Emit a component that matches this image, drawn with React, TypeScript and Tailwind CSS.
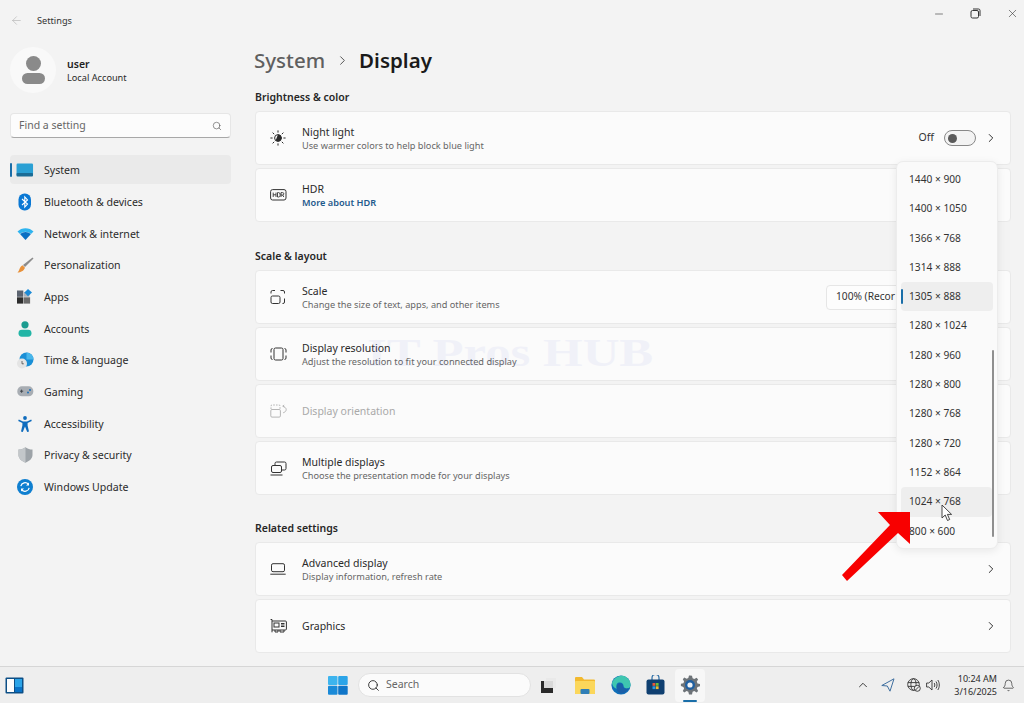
import { ReactNode } from "react";
import { ChevronRight, Search, ArrowLeft, Minus, X, ChevronUp, Bell } from "lucide-react";

const uiFont = "font-['Noto_Sans',sans-serif]";

const navIcons: Record<string, ReactNode> = {
  System: (
    <svg width="18" height="14" viewBox="0 0 18 14">
      <rect x="0.5" y="0.5" width="15" height="11" rx="1" fill="#2aa0d4" transform="scale(1.1)" />
      <rect x="0.5" y="10" width="16.5" height="3.5" rx="1" fill="#1b6c96" />
    </svg>
  ),
  "Bluetooth & devices": (
    <svg width="14" height="18" viewBox="0 0 14 18">
      <rect x="0.5" y="0.5" width="12.5" height="17" rx="6" fill="#0a78d4" />
      <path d="M4 6l5.5 5L6.8 14V4L9.5 7 4 12" stroke="#fff" strokeWidth="1.1" fill="none" />
    </svg>
  ),
  "Network & internet": (
    <svg width="17" height="14" viewBox="0 0 17 14">
      <path d="M0.5 4.5C4.5 0 12.5 0 16.5 4.5L14 7C11 4 6 4 3 7z" fill="#2fb4ef" />
      <path d="M3.2 7.2C6 4.4 11 4.4 13.8 7.2L8.5 13z" fill="#0a6fc2" />
    </svg>
  ),
  Personalization: (
    <svg width="17" height="17" viewBox="0 0 17 17">
      <path d="M15.5 0.5L16.5 1.5 8 10 6 8z" fill="#8c8c8c" />
      <path d="M5.5 8.2L8 10.8C7 14 3.5 15.5 0.5 15.5 2.5 14 2.5 9.5 5.5 8.2z" fill="#e8913a" />
    </svg>
  ),
  Apps: (
    <svg width="16" height="15" viewBox="0 0 16 15">
      <rect x="0" y="1.5" width="6.3" height="6.3" fill="#5c6470" />
      <rect x="0" y="8.3" width="6.3" height="6.3" fill="#2d2d2d" />
      <rect x="6.8" y="8.3" width="6.3" height="6.3" fill="#6b6b6b" />
      <rect x="7" y="3" width="5.5" height="4.8" fill="#aab2bb" />
      <path d="M11 0l4 3.6-4 3.6-3.6-3.6z" fill="#1b8ad6" />
    </svg>
  ),
  Accounts: (
    <svg width="14" height="16" viewBox="0 0 14 16">
      <circle cx="7" cy="3.8" r="3.6" fill="#1a9c90" />
      <rect x="0.5" y="8.7" width="13" height="7" rx="3.4" fill="#22b5a6" />
    </svg>
  ),
  "Time & language": (
    <svg width="17" height="17" viewBox="0 0 17 17">
      <circle cx="9.5" cy="7.5" r="7" fill="#1a8fd6" />
      <path d="M9.5 0.5a7 7 0 0 1 7 7h-7z" fill="#48b6ea" />
      <circle cx="5" cy="11.5" r="5" fill="#e4e4e4" />
      <path d="M5 9v2.8h1.8" stroke="#4a4a4a" strokeWidth="0.8" fill="none" />
    </svg>
  ),
  Gaming: (
    <svg width="17" height="11" viewBox="0 0 17 11">
      <rect x="0.3" y="0.3" width="16" height="10" rx="4.6" fill="#a8adb3" />
      <path d="M3 5.2h3.2M4.6 3.6v3.2" stroke="#3a3f45" strokeWidth="0.9" />
      <circle cx="11" cy="6.5" r="1" fill="#1c6fb6" />
      <circle cx="13" cy="4" r="1" fill="#1c6fb6" />
    </svg>
  ),
  Accessibility: (
    <svg width="14" height="16" viewBox="0 0 14 16">
      <circle cx="7" cy="2" r="1.9" fill="#0f6cbd" />
      <path d="M0.8 3.6L5 5.4h4l4.2-1.8.6 1.4L9.6 7v2.6L11 15.4 9.2 16 7 10.4 4.8 16 3 15.4 4.4 9.6V7L0.2 5z" fill="#0f6cbd" />
    </svg>
  ),
  "Privacy & security": (
    <svg width="15" height="16" viewBox="0 0 15 16">
      <path d="M7.5 0.3C9.5 2 12 2.5 14.5 2.6V8c0 3.6-3.2 6.2-7 7.7C3.7 14.2 0.5 11.6 0.5 8V2.6C3 2.5 5.5 2 7.5 0.3z" fill="#9da3a8" />
      <path d="M7.5 0.3V15.7C3.7 14.2 0.5 11.6 0.5 8V2.6C3 2.5 5.5 2 7.5 0.3z" fill="#c3c7ca" />
    </svg>
  ),
  "Windows Update": (
    <svg width="16" height="16" viewBox="0 0 16 16">
      <circle cx="8" cy="8" r="8" fill="#0f7fd0" />
      <path d="M3.8 7.2A4.3 4.3 0 0 1 11.4 5.4M12.2 8.8A4.3 4.3 0 0 1 4.6 10.6" stroke="#fff" strokeWidth="1.2" fill="none" />
      <path d="M12 3.4v3h-3zM4 12.6v-3h3z" fill="#fff" />
    </svg>
  ),
};

const navItems = Object.keys(navIcons);

const NightIcon = () => (
  <svg width="16" height="16" viewBox="0 0 16 16" stroke="#2b2b2b" strokeWidth="1" strokeLinecap="round">
    <circle cx="8" cy="8" r="3.4" fill="none" />
    <path d="M8 4.6a3.4 3.4 0 0 1 0 6.8 5 5 0 0 1-2.4-.9z" fill="#2b2b2b" stroke="none" />
    <path d="M8 0.8v1.4M8 13.8v1.4M0.8 8h1.4M13.8 8h1.4M2.9 2.9l1 1M12.1 12.1l1 1M2.9 13.1l1-1M12.1 3.9l1-1" />
  </svg>
);

const HdrIcon = () => (
  <svg width="17" height="12" viewBox="0 0 17 12">
    <rect x="0.6" y="0.6" width="15.4" height="10.4" rx="2" fill="none" stroke="#333" strokeWidth="1" />
    <path d="M3.2 3.6v4.4M6 3.6v4.4M3.2 5.8H6M7.5 3.6v4.4h1.2a1.5 1.5 0 0 0 1.4-1.4V5a1.5 1.5 0 0 0-1.4-1.4zM11 8V3.6h1.6a1.2 1.2 0 0 1 0 2.4H11M12.6 6l1.2 2" fill="none" stroke="#333" strokeWidth="0.9" />
  </svg>
);

const ScaleIcon = () => (
  <svg width="16" height="16" viewBox="0 0 16 16" fill="none" stroke="#333" strokeWidth="1">
    <rect x="1" y="7" width="9" height="7.5" rx="1.5" />
    <path d="M1 4.5V3a1.5 1.5 0 0 1 1.5-1.5H5M10.5 1.5H13A1.5 1.5 0 0 1 14.5 3v1.5M14.5 9.5V13A1.5 1.5 0 0 1 13 14.5h-.5" />
  </svg>
);

const ResolutionIcon = () => (
  <svg width="17" height="14" viewBox="0 0 17 14" fill="none" stroke="#333" strokeWidth="1">
    <rect x="4" y="1" width="9" height="12" rx="1.5" />
    <path d="M2.5 1.5A1.5 1.5 0 0 0 1 3v2.5M1 8.5V11a1.5 1.5 0 0 0 1.5 1.5M14.5 1.5A1.5 1.5 0 0 1 16 3v2.5M16 8.5V11a1.5 1.5 0 0 1-1.5 1.5" />
  </svg>
);

const OrientationIcon = () => (
  <svg width="17" height="14" viewBox="0 0 17 14" fill="none" stroke="#b5b5b5" strokeWidth="1">
    <path d="M1 5V2a1 1 0 0 1 1-1h7a1 1 0 0 1 1 1v3" strokeDasharray="1.6 1.2" />
    <rect x="0.8" y="5.5" width="9.6" height="7.6" rx="1.2" />
    <path d="M12.8 2.2c2 .6 3.4 2 3.4 3.4s-1.2 2.6-3 3.2M12.8 2.2l1.4-1.2M12.8 2.2l1.6 1" />
  </svg>
);

const MultiIcon = () => (
  <svg width="17" height="15" viewBox="0 0 17 15" fill="none" stroke="#333" strokeWidth="1">
    <rect x="5" y="1" width="11" height="8" rx="1.5" />
    <rect x="1.5" y="4.5" width="10" height="7" rx="1.5" fill="#fbfbfb" />
    <path d="M0.5 14h12" />
  </svg>
);

const LaptopIcon = () => (
  <svg width="16" height="12" viewBox="0 0 16 12" fill="none" stroke="#333" strokeWidth="1">
    <rect x="1.5" y="0.7" width="13" height="8" rx="1.5" />
    <path d="M0.3 11.2h15.4" />
  </svg>
);

const GraphicsIcon = () => (
  <svg width="17" height="14" viewBox="0 0 17 14" fill="none" stroke="#333" strokeWidth="1">
    <path d="M0.6 0.5h1.4v12.8M2 2h13.4a1 1 0 0 1 1 1v7a1 1 0 0 1-1 1H2" />
    <rect x="4" y="4" width="5" height="4" />
    <path d="M11 4.5h3.5M11 6h3.5M11 7.5h3.5M5 11v2h3v-2M10 11v2h4v-2" />
  </svg>
);

function Card({
  icon,
  title,
  sub,
  link,
  disabled,
  right,
}: {
  icon: ReactNode;
  title: string;
  sub?: string;
  link?: string;
  disabled?: boolean;
  right?: ReactNode;
}) {
  return (
    <div className="h-[54px] mt-[3px] first:mt-0 flex items-center bg-[#fbfbfb] border border-[#e9e9e9] rounded-[4px] pl-[13px] pr-[14px]">
      <div className="w-[18px] flex justify-center">{icon}</div>
      <div className="ml-[15px] flex flex-col">
        <span className={`text-[10.5px] leading-[14px] ${disabled ? "text-[#a9a9a9]" : "text-[#2a2a2a]"}`}>{title}</span>
        {sub && <span className="text-[9.2px] leading-[13px] text-[#666]">{sub}</span>}
        {link && <span className="text-[9.2px] leading-[13px] font-semibold text-[#1f5a8c]">{link}</span>}
      </div>
      <div className="ml-auto flex items-center">{right}</div>
    </div>
  );
}

const Chevron = () => <ChevronRight size={14} strokeWidth={1.6} className="text-[#222]" />;

function SectionTitle({ children, className }: { children: string; className?: string }) {
  return (
    <div className={`h-[18px] pt-[2px] mb-[5px] flex items-center text-[10.5px] font-semibold text-[#262626] ${className ?? ""}`}>
      {children}
    </div>
  );
}

const resolutions = [
  "1440 × 900",
  "1400 × 1050",
  "1366 × 768",
  "1314 × 888",
  "1305 × 888",
  "1280 × 1024",
  "1280 × 960",
  "1280 × 800",
  "1280 × 768",
  "1280 × 720",
  "1152 × 864",
  "1024 × 768",
  "800 × 600",
];

function ResolutionMenu() {
  return (
    <div className="absolute left-[896px] top-[161px] w-[102px] h-[388px] bg-[#fafafa] border border-[#ececec] rounded-[7px] shadow-[0_2px_8px_rgba(0,0,0,0.08)] pt-[3px] px-[4px]">
      {resolutions.map((r) => (
        <div
          key={r}
          className={`relative h-[29.3px] pl-[8px] flex items-center text-[10.2px] text-[#333] rounded-[4px] ${
            r === "1305 × 888" ? "bg-[#eeeeee]" : r === "1024 × 768" ? "bg-[#eeeeee] mr-[1px]" : ""
          }`}
        >
          {r === "1305 × 888" && <span className="absolute left-0 top-[7px] h-[15px] w-[2px] bg-[#1a6ea8] rounded" />}
          {r}
        </div>
      ))}
      <div className="absolute right-[3px] top-[188px] h-[187px] w-[2px] rounded bg-[#8f8f8f]" />
    </div>
  );
}

function Taskbar() {
  return (
    <div className="h-[37px] border-t border-[#d6d6d6] bg-[#eeeeee] flex items-center">
      <svg className="ml-[5px]" width="19" height="17" viewBox="0 0 19 17">
        <rect x="0.5" y="0.5" width="18" height="16" rx="1" fill="#0d4f86" />
        <rect x="2" y="2" width="7" height="13" fill="#fdfdfd" />
        <rect x="10" y="2" width="7" height="8" fill="#2ba4e8" />
        <rect x="10" y="10" width="7" height="5" fill="#0a72c6" />
      </svg>
      <svg className="ml-[304px]" width="20" height="19" viewBox="0 0 20 19">
        <rect x="0" y="0" width="9.5" height="9" rx="1" fill="#3db4ee" />
        <rect x="10.2" y="0" width="9.5" height="9" rx="1" fill="#2ba4e8" />
        <rect x="0" y="9.7" width="9.5" height="9" rx="1" fill="#1a8ad8" />
        <rect x="10.2" y="9.7" width="9.5" height="9" rx="1" fill="#0f75c8" />
      </svg>
      <div className="ml-[10px] w-[173px] h-[24px] rounded-full bg-[#fbfbfb] border border-[#e2e2e2] flex items-center pl-[8px] gap-[6px]">
        <Search size={13} strokeWidth={1.6} className="text-[#222]" />
        <span className="text-[10.5px] text-[#666]">Search</span>
      </div>
      <svg className="ml-[10px]" width="15" height="15" viewBox="0 0 15 15">
        <rect x="5" y="0" width="10" height="10" fill="#e9e9e9" />
        <rect x="0" y="3" width="12" height="12" fill="#2a2a2a" />
        <rect x="3" y="3" width="9" height="7" fill="#d8d8d8" />
      </svg>
      <svg className="ml-[19px]" width="20" height="17" viewBox="0 0 20 17">
        <path d="M0 1a1 1 0 0 1 1-1h6l2 2.5h10a1 1 0 0 1 1 1V16a1 1 0 0 1-1 1H1a1 1 0 0 1-1-1z" fill="#f2b92e" />
        <rect x="0" y="4" width="20" height="13" rx="1" fill="#fbd75b" />
        <rect x="5.5" y="12" width="9" height="5" rx="1" fill="#2f7fb8" />
      </svg>
      <svg className="ml-[16px]" width="20" height="20" viewBox="0 0 20 20">
        <circle cx="10" cy="10" r="9.6" fill="#0f6fb8" />
        <path d="M1 8C3 2 9 0 13 1c4 1.4 6.6 5 6.6 9 0 2-1.4 3.4-3.6 3.4-2 0-3.4-1-3.4-2.4 0-2-2-4-4.6-3.4C5.4 8 4.8 11 6 14 3 13 1.4 11 1 8z" fill="#3fc6b0" />
        <path d="M7 9c2-1.5 5-.5 5 2 0 2.5 3 3.5 6 2-2 4-6 6-9 5.5C5.5 17 4.5 12 7 9z" fill="#1a5fa8" />
      </svg>
      <svg className="ml-[15px]" width="19" height="20" viewBox="0 0 19 20">
        <path d="M6 5V3a3.5 3.5 0 0 1 7 0v2" fill="none" stroke="#2c6ea6" strokeWidth="1.2" />
        <rect x="0.5" y="4.5" width="18" height="15" rx="2" fill="#0f3f70" />
        <rect x="6.5" y="8" width="2.8" height="2.8" fill="#e8553a" />
        <rect x="9.8" y="8" width="2.8" height="2.8" fill="#6cbc3a" />
        <rect x="6.5" y="11.3" width="2.8" height="2.8" fill="#2a9ae0" />
        <rect x="9.8" y="11.3" width="2.8" height="2.8" fill="#f2b92e" />
      </svg>
      <div className="ml-[10px] relative w-[30px] h-[33px] rounded-[4px] bg-[#f7f7f7] flex items-center justify-center">
        <svg width="20" height="20" viewBox="0 0 20 20">
          <path
            d="M10 0.5l2 .2.6 2.5 1.7.8 2.3-1.2 1.5 1.6-1.3 2.2.7 1.8 2.5.6v2.2l-2.5.7-.7 1.7 1.3 2.3-1.5 1.5-2.3-1.3-1.7.7-.6 2.6H9l-.7-2.6-1.7-.7-2.3 1.3-1.5-1.5 1.3-2.3-.7-1.7L.9 11V8.8l2.5-.6.7-1.8L2.8 4.2l1.5-1.6 2.3 1.2 1.7-.8L9 .5z"
            fill="#6d7378"
          />
          <circle cx="10" cy="10" r="5" fill="#1f5fa0" />
          <circle cx="10" cy="10" r="2.6" fill="#eef2f6" />
        </svg>
        <span className="absolute bottom-0 left-[8px] w-[14px] h-[2px] rounded bg-[#1a6ea8]" />
      </div>
      <ChevronUp size={14} strokeWidth={1.6} className="ml-[151px] text-[#333]" />
      <svg className="ml-[11px]" width="14" height="14" viewBox="0 0 14 14" fill="none" stroke="#3f6f9f" strokeWidth="1">
        <path d="M13 0.8L0.8 7.5 6.3 8 9 13.2z" />
      </svg>
      <svg className="ml-[12px]" width="14" height="14" viewBox="0 0 14 14" fill="none" stroke="#333" strokeWidth="0.9">
        <circle cx="6.5" cy="6.5" r="5.8" />
        <ellipse cx="6.5" cy="6.5" rx="2.6" ry="5.8" />
        <path d="M0.9 4.6h11.2M0.9 8.4h11.2" />
        <circle cx="10.3" cy="10.3" r="3" fill="#eee" />
        <path d="M8.5 12l3.5-3.5" />
      </svg>
      <svg className="ml-[5px]" width="14" height="12" viewBox="0 0 14 12" fill="none" stroke="#333" strokeWidth="0.9">
        <path d="M0.6 4h2.2L6 1v10L2.8 8H0.6zM8.2 4c.8 1.2.8 2.8 0 4M10 2.5c1.4 2 1.4 5 0 7M11.8 1c2 3 2 7 0 10" />
      </svg>
      <div className="ml-[8px] w-[50px] flex flex-col items-end text-[9px] leading-[13px] text-[#2a2a2a] pr-[1px]">
        <span>10:24 AM</span>
        <span>3/16/2025</span>
      </div>
      <Bell size={13} strokeWidth={1.3} className="ml-[4px] text-[#333]" />
    </div>
  );
}

export default function App() {
  return (
    <div className={`relative w-[1024px] h-[703px] overflow-hidden flex flex-col bg-[#f3f3f3] ${uiFont}`}>
      <div className="h-[666px] flex">
        <aside className="w-[255px] pl-[10px] pr-[24px] flex flex-col">
          <div className="h-[41px] flex items-center">
            <ArrowLeft size={13} strokeWidth={1.2} className="text-[#b3b3b3]" />
            <span className="ml-[14px] text-[9.2px] text-[#333]">Settings</span>
          </div>
          <div className="mt-[6px] h-[46px] flex items-center">
            <div className="w-[46px] h-[46px] rounded-full bg-[#f9f9f9] flex flex-col items-center justify-center">
              <span className="w-[15px] h-[15px] rounded-full bg-[#8a8a8a]" />
              <span className="mt-[2px] w-[23px] h-[11px] rounded-full bg-[#8a8a8a]" />
            </div>
            <div className="ml-[11px] mt-[2px] flex flex-col">
              <span className="text-[10.5px] leading-[14px] font-semibold text-[#1f1f1f]">user</span>
              <span className="text-[9.2px] leading-[14px] text-[#2a2a2a]">Local Account</span>
            </div>
          </div>
          <div className="mt-[20px] h-[25px] rounded-[4px] bg-[#fcfcfc] border border-[#e6e6e6] border-b-[#a8a8a8] flex items-center px-[8px]">
            <span className="text-[10.5px] text-[#666]">Find a setting</span>
            <Search size={10} strokeWidth={1.5} className="ml-auto text-[#555]" />
          </div>
          <nav className="mt-[17px] flex flex-col">
            {navItems.map((item) => (
              <div
                key={item}
                className={`relative flex items-center ${item === "System" ? "h-[29px] mb-[2px] bg-[#eaeaea] rounded-[4px]" : "h-[31.7px]"}`}
              >
                {item === "System" && <span className="absolute left-0 top-[8px] w-[2px] h-[14px] rounded bg-[#1a6ea8]" />}
                <span className="ml-[6px] w-[18px] flex justify-center">{navIcons[item]}</span>
                <span className="ml-[10px] mt-[2px] text-[10.6px] text-[#2b2b2b]">{item}</span>
              </div>
            ))}
          </nav>
        </aside>

        <main className="w-[756px] flex flex-col">
          <div className="mt-[44px] h-[33px] flex items-center -ml-[1px]">
            <span className="text-[20.5px] font-medium text-[#5f5f5f]">System</span>
            <ChevronRight size={15} strokeWidth={1.6} className="ml-[10px] text-[#555]" />
            <span className="ml-[9px] text-[20.5px] font-semibold text-[#1a1a1a]">Display</span>
          </div>
          <div className="h-[11px]" />
          <SectionTitle>Brightness &amp; color</SectionTitle>
          <div className="flex flex-col">
            <Card
              icon={<NightIcon />}
              title="Night light"
              sub="Use warmer colors to help block blue light"
              right={
                <>
                  <span className="text-[10.5px] text-[#333]">Off</span>
                  <span className="ml-[10px] w-[32px] h-[16px] rounded-full border border-[#888] bg-[#f3f3f3] flex items-center pl-[3px]">
                    <span className="w-[9px] h-[9px] rounded-full bg-[#5a5a5a]" />
                  </span>
                  <span className="ml-[8px] -mr-[2px]">
                    <Chevron />
                  </span>
                </>
              }
            />
            <Card icon={<HdrIcon />} title="HDR" link="More about HDR" />
          </div>
          <SectionTitle className="mt-[25px]">Scale &amp; layout</SectionTitle>
          <div className="flex flex-col">
            <Card
              icon={<ScaleIcon />}
              title="Scale"
              sub="Change the size of text, apps, and other items"
              right={
                <div className="mr-[70px] w-[100px] h-[25px] rounded-[4px] bg-[#fdfdfd] border border-[#e6e6e6] flex items-center pl-[9px] text-[10.2px] text-[#333] whitespace-nowrap">
                  100% (Recor
                </div>
              }
            />
            <Card icon={<ResolutionIcon />} title="Display resolution" sub="Adjust the resolution to fit your connected display" />
            <Card icon={<OrientationIcon />} title="Display orientation" disabled />
            <Card icon={<MultiIcon />} title="Multiple displays" sub="Choose the presentation mode for your displays" />
          </div>
          <SectionTitle className="mt-[24px]">Related settings</SectionTitle>
          <div className="flex flex-col">
            <Card
              icon={<LaptopIcon />}
              title="Advanced display"
              sub="Display information, refresh rate"
              right={
                <span className="-mr-[2px]">
                  <Chevron />
                </span>
              }
            />
            <Card
              icon={<GraphicsIcon />}
              title="Graphics"
              right={
                <span className="-mr-[2px]">
                  <Chevron />
                </span>
              }
            />
          </div>
        </main>
      </div>

      <Taskbar />

      {/* window buttons */}
      <div className="absolute top-[7px] right-[5px] flex items-center gap-[25px] text-[#333]">
        <Minus size={12} strokeWidth={1.2} />
        <svg width="11" height="11" viewBox="0 0 11 11" fill="none" stroke="#333" strokeWidth="1">
          <rect x="1" y="2.5" width="7.5" height="7.5" rx="1.5" />
          <path d="M3 1h5.5A1.5 1.5 0 0 1 10 2.5V8" />
        </svg>
        <X size={13} strokeWidth={1.1} />
      </div>

      {/* watermark */}
      <div className="absolute left-[367px] top-[329px] origin-left scale-x-[1.24] font-['Liberation_Serif',serif] text-[41px] leading-[46px] font-bold text-[#3b4fd0] opacity-[0.05] whitespace-nowrap">
        IT Pros HUB
      </div>

      <ResolutionMenu />

      {/* red arrow */}
      <svg className="absolute left-[838px] top-[508px]" width="76" height="76" viewBox="0 0 76 76">
        <path d="M40 4H72V36L60 25 9 73 4 67 52 17z" fill="#f80000" />
      </svg>

      {/* pointer */}
      <svg className="absolute left-[941px] top-[504px]" width="12" height="18" viewBox="0 0 12 18">
        <path d="M1 1v13l3.2-3 2.3 5.5 2.2-1L6.4 10.4H10.6z" fill="#fff" stroke="#333" strokeWidth="0.9" />
      </svg>
    </div>
  );
}
